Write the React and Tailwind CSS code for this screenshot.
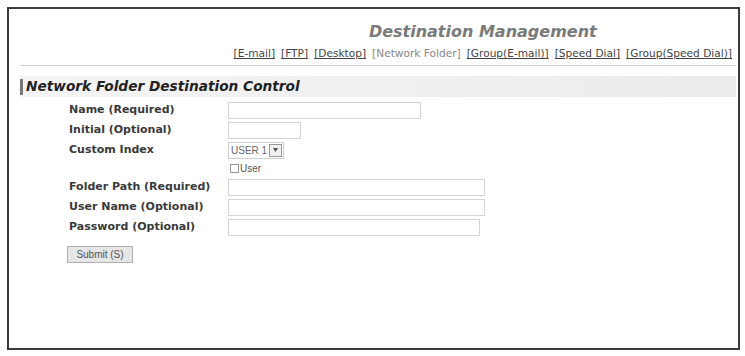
import React from "react";

const font = { fontFamily: '"DejaVu Sans", Verdana, sans-serif' };

function Row({ label, children, h = "h-[20px]" }) {
  return (
    <div className={`flex items-center ${h}`}>
      <div className="w-[208px] shrink-0 pl-[49px] text-[11px] font-bold text-[#3a3a3a] whitespace-nowrap">{label}</div>
      <div className="flex items-center">{children}</div>
    </div>
  );
}

function Input({ w }) {
  return <div className={`${w} h-[17px] border border-[#d4d4d4] bg-white`} />;
}

export default function App() {
  const links = [
    ["[E-mail]", true],
    ["[FTP]", true],
    ["[Desktop]", true],
    ["[Network Folder]", false],
    ["[Group(E-mail)]", true],
    ["[Speed Dial]", true],
    ["[Group(Speed Dial)]", true],
  ];
  return (
    <div className="w-[745px] h-[356px] bg-white pt-[7px] pl-[7px]" style={font}>
      <div className="w-[733px] h-[343px] border-2 border-[#3a3a3a] bg-white pl-[11px] pr-[2px]">
        <div className="flex justify-end pr-[4px] pt-[12px]">
          <div className="flex flex-col items-center">
            <div className="text-[16px] font-bold italic text-[#7a7a7a] leading-[22px]">Destination Management</div>
            <div className="text-[10.6px] text-[#555] leading-[14px] mt-[3px] flex gap-[6px]">
              {links.map(([t, u]) => (
                <span key={t} className={u ? "underline text-[#444]" : "text-[#888]"}>{t}</span>
              ))}
            </div>
          </div>
        </div>
        <div className="h-px bg-[#cfcfcf] mt-[5px]" />
        <div className="mt-[10px] h-[21px] bg-gradient-to-r from-[#f4f4f4] to-[#ececec] flex items-center">
          <div className="w-[3px] h-[16px] bg-[#777] mr-[3px]" />
          <div className="text-[13.7px] font-bold italic text-[#222] whitespace-nowrap">Network Folder Destination Control</div>
        </div>
        <div className="mt-[3px] flex flex-col">
          <Row label="Name (Required)"><Input w="w-[193px]" /></Row>
          <Row label="Initial (Optional)"><Input w="w-[73px]" /></Row>
          <Row label="Custom Index">
            <div className="flex items-center h-[17px] border border-[#cfcfcf] bg-white pl-[2px]">
              <span className="text-[10px] text-[#666] pr-[2px]" style={{ fontFamily: '"Liberation Sans", Arial, sans-serif' }}>USER 1</span>
              <div className="w-[13px] h-[13px] border border-[#999] bg-[#f0f0f0] flex items-center justify-center mr-[1px]">
                <svg width="5" height="4" viewBox="0 0 5 4"><path d="M0 0h5L2.5 4z" fill="#555" /></svg>
              </div>
            </div>
          </Row>
          <Row label="" h="h-[17px]">
            <div className="flex items-center pl-[2px]">
              <div className="w-[9px] h-[9px] border border-[#999] bg-white mr-[1px]" />
              <span className="text-[10px] text-[#555]" style={{ fontFamily: '"Liberation Sans", Arial, sans-serif' }}>User</span>
            </div>
          </Row>
          <Row label="Folder Path (Required)"><Input w="w-[257px]" /></Row>
          <Row label="User Name (Optional)"><Input w="w-[257px]" /></Row>
          <Row label="Password (Optional)"><Input w="w-[252px]" /></Row>
        </div>
        <div className="pl-[47px] mt-[4px]">
          <div className="inline-flex items-center justify-center w-[66px] h-[17px] border border-[#b0b0b0] bg-[#e6e6e6] text-[10px] text-[#555]" style={{ fontFamily: '"Liberation Sans", Arial, sans-serif' }}>Submit (S)</div>
        </div>
      </div>
    </div>
  );
}
